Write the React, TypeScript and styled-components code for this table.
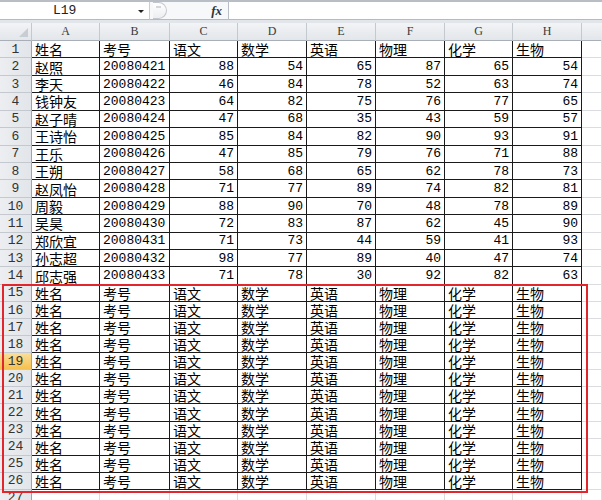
import React from "react";
import styled, { createGlobalStyle } from "styled-components";

const Global = createGlobalStyle`
  html, body { margin: 0; padding: 0; background: #ffffff; overflow: hidden; }
  #root { width: 602px; height: 500px; overflow: hidden; }
`;

const CJK = `"Liberation Mono", "Noto Sans CJK SC", monospace`;

const Page = styled.div`
  width: 602px;
  height: 500px;
  display: flex;
  flex-direction: column;
  background: #ffffff;
`;

const FormulaBar = styled.div`
  height: 24px;
  box-sizing: border-box;
  display: flex;
  align-items: stretch;
  background: #e4e8ee;
  border-top: 2px solid #b9bec6;
  border-bottom: 3px solid #e2e5ea;
`;

const NameBox = styled.div`
  width: 150px;
  box-sizing: border-box;
  background: #ffffff;
  border-right: 1px solid #c9ced6;
  border-bottom: 1px solid #b4bac3;
  display: flex;
  align-items: center;
  position: relative;
  font-family: "Liberation Mono", monospace;
  font-size: 13px;
  color: #222;
  padding-left: 53px;
`;

const Arrow = styled.span`
  position: absolute;
  right: 5px;
  top: 8px;
  width: 0;
  height: 0;
  border-left: 3px solid transparent;
  border-right: 3px solid transparent;
  border-top: 3px solid #222;
`;

const FxArea = styled.div`
  width: 78px;
  box-sizing: border-box;
  background: #f7f8fa;
  border-bottom: 1px solid #b4bac3;
  display: flex;
  align-items: center;
  justify-content: space-between;
  padding: 0 4px 0 3px;
`;

const Knob = styled.span`
  width: 14px;
  height: 17px;
  box-sizing: border-box;
  border: 1px solid #c3c7cd;
  border-left: none;
  border-radius: 0 9px 9px 0;
  background: linear-gradient(#ffffff, #eceef1);
  position: relative;
  &::after {
    content: "";
    position: absolute;
    left: 3px;
    top: 3px;
    width: 5px;
    height: 2px;
    background: #d3d6da;
  }
`;

const Fx = styled.span`
  font-family: "Liberation Serif", serif;
  font-style: italic;
  font-weight: bold;
  font-size: 13px;
  color: #333;
  margin-right: 2px;
`;

const FormulaInput = styled.div`
  flex: 1;
  background: #ffffff;
  border-left: 1px solid #b8bec6;
  border-bottom: 1px solid #b4bac3;
`;

const Sheet = styled.div`
  position: relative;
  display: flex;
  flex-direction: column;
`;

const COLS = "32px 68px 70px 68px 69px 69px 69px 68px 69px 1fr";

const Row = styled.div<{ $h: number }>`
  display: grid;
  grid-template-columns: ${COLS};
  height: ${(p) => p.$h}px;
`;

const ColHead = styled.div<{ $last?: boolean }>`
  box-sizing: border-box;
  background: linear-gradient(#f2f4f6, #e3e6ea);
  border-right: 1px solid ${(p) => (p.$last ? "transparent" : "#c4c9cf")};
  border-bottom: 1px solid #a9afb7;
  display: flex;
  align-items: center;
  justify-content: center;
  font-family: "Liberation Serif", serif;
  font-size: 12px;
  color: #3a3a3a;
`;

const Corner = styled(ColHead)`
  position: relative;
  &::after {
    content: "";
    position: absolute;
    right: 3px;
    bottom: 3px;
    width: 0;
    height: 0;
    border-left: 9px solid transparent;
    border-bottom: 9px solid #c8cdd3;
  }
`;

const RowHead = styled.div<{ $sel?: boolean }>`
  box-sizing: border-box;
  background: ${(p) =>
    p.$sel ? "linear-gradient(#fadf9a, #f5c14f)" : "linear-gradient(90deg, #eceef1, #e2e5e9)"};
  border-right: 1px solid #9da4ad;
  border-bottom: 1px solid #c4c9cf;
  display: flex;
  align-items: center;
  justify-content: center;
  font-family: "Liberation Mono", monospace;
  font-size: 13px;
  color: #333;
`;

const Cell = styled.div<{ $num?: boolean; $light?: boolean; $cjk?: boolean }>`
  box-sizing: border-box;
  border-right: 1px solid ${(p) => (p.$light ? "#dadcdf" : "#1a1a1a")};
  border-bottom: 1px solid ${(p) => (p.$light ? "#dadcdf" : "#1a1a1a")};
  display: flex;
  align-items: center;
  justify-content: ${(p) => (p.$num ? "flex-end" : "flex-start")};
  padding: 0 3px 0 3px;
  font-family: ${CJK};
  font-size: ${(p) => (p.$cjk ? 14 : 13)}px;
  color: #000;
  white-space: nowrap;
  overflow: hidden;
`;

const RedBox = styled.div`
  position: absolute;
  left: 2px;
  top: 261px;
  width: 586px;
  height: 209px;
  box-sizing: border-box;
  border: 2px solid #e2262e;
  pointer-events: none;
`;

const header = ["姓名", "考号", "语文", "数学", "英语", "物理", "化学", "生物"];

const data: (string | number)[][] = [
  ["赵照", "20080421", 88, 54, 65, 87, 65, 54],
  ["李天", "20080422", 46, 84, 78, 52, 63, 74],
  ["钱钟友", "20080423", 64, 82, 75, 76, 77, 65],
  ["赵子晴", "20080424", 47, 68, 35, 43, 59, 57],
  ["王诗怡", "20080425", 85, 84, 82, 90, 93, 91],
  ["王乐", "20080426", 47, 85, 79, 76, 71, 88],
  ["王朔", "20080427", 58, 68, 65, 62, 78, 73],
  ["赵凤怡", "20080428", 71, 77, 89, 74, 82, 81],
  ["周毅", "20080429", 88, 90, 70, 48, 78, 89],
  ["吴昊", "20080430", 72, 83, 87, 62, 45, 90],
  ["郑欣宜", "20080431", 71, 73, 44, 59, 41, 93],
  ["孙志超", "20080432", 98, 77, 89, 40, 47, 74],
  ["邱志强", "20080433", 71, 78, 30, 92, 82, 63],
];

const rows: (string | number)[][] = [header, ...data];
for (let i = 0; i < 12; i++) rows.push(header);

const letters = ["A", "B", "C", "D", "E", "F", "G", "H"];

const isCjk = (v: string | number) => typeof v === "string" && /[^\x00-\x7f]/.test(v);

export default function App() {
  return (
    <Page>
      <Global />
      <FormulaBar>
        <NameBox>
          L19
          <Arrow />
        </NameBox>
        <FxArea>
          <Knob />
          <Fx>fx</Fx>
        </FxArea>
        <FormulaInput />
      </FormulaBar>
      <Sheet>
        <Row $h={18}>
          <Corner />
          {letters.map((l) => (
            <ColHead key={l}>{l}</ColHead>
          ))}
          <ColHead $last />
        </Row>
        {rows.map((r, i) => (
          <Row key={i} $h={i < 14 ? 17.43 : 17.08}>
            <RowHead $sel={i + 1 === 19}>{i + 1}</RowHead>
            {r.map((v, j) => (
              <Cell key={j} $num={typeof v === "number"} $cjk={isCjk(v)}>
                {v}
              </Cell>
            ))}
            <Cell $light />
          </Row>
        ))}
        <Row $h={17}>
          <RowHead>27</RowHead>
          {letters.map((l) => (
            <Cell key={l} $light />
          ))}
          <Cell $light />
        </Row>
        <RedBox />
      </Sheet>
    </Page>
  );
}
